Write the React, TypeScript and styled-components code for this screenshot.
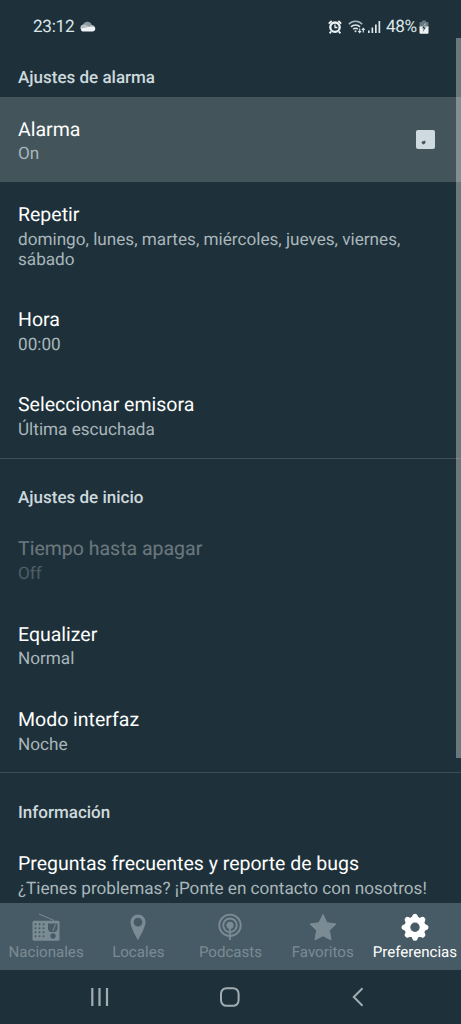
import React from 'react';
import styled, { createGlobalStyle } from 'styled-components';

const Global = createGlobalStyle`
  * { box-sizing: border-box; }
  body { margin: 0; background: #1e313a; font-family: Roboto, sans-serif; text-rendering: geometricPrecision; }
`;

const Screen = styled.div`
  width: 461px;
  height: 1024px;
  display: flex;
  flex-direction: column;
  overflow: hidden;
  background: #1e313a;
`;

const StatusBar = styled.header`
  flex: 0 0 38px;
  display: flex;
  align-items: center;
  justify-content: space-between;
  padding: 16px 32px 0 33px;
  color: #dce5e9;
  font-size: 17.2px;
  line-height: 21px;
`;

const StatusGroup = styled.div`
  display: flex;
  align-items: center;
  svg { display: block; }
`;

const Clock = styled.span`
  width: 47px;
  padding-top: 1px;
  letter-spacing: -0.3px;
`;

const Battery = styled.span`
  width: 33px;
  padding-top: 1px;
  letter-spacing: -0.4px;
`;

const Content = styled.main`
  flex: 1;
  min-height: 0;
  overflow: hidden;
  position: relative;
`;

const ScrollThumb = styled.div`
  position: absolute;
  top: 0;
  right: 0;
  width: 5px;
  height: 720px;
  background: rgba(255, 255, 255, 0.34);
`;

const Heading = styled.h2<{ $divided?: boolean }>`
  height: 58.5px;
  margin: 0;
  padding: ${p => (p.$divided ? 29.5 : 30)}px 18px 0;
  border-top: ${p => (p.$divided ? '1px solid #3c4d55' : 'none')};
  color: #ced9dd;
  font-size: 17px;
  font-weight: 500;
  line-height: 20px;
`;

const Row = styled.div<{ $active?: boolean; $disabled?: boolean }>`
  min-height: 85.35px;
  display: flex;
  align-items: flex-start;
  justify-content: space-between;
  padding: 20px 26.5px 17.5px 18px;
  background: ${p => (p.$active ? '#43545b' : 'transparent')};
  opacity: ${p => (p.$disabled ? 0.34 : 1)};
`;

const Title = styled.div`
  height: 26px;
  color: #fff;
  font-size: 19.5px;
  line-height: 25px;
  white-space: nowrap;
`;

const Summary = styled.div`
  margin-top: 1.8px;
  color: #aab6bb;
  font-size: 17.15px;
  line-height: 20px;
`;

const Checkbox = styled.div`
  width: 19px;
  height: 19px;
  margin-top: 13px;
  border-radius: 2px;
  background: #cfdae0;
  display: flex;
  svg { display: block; }
`;

const Tabs = styled.nav`
  flex: 0 0 67px;
  display: grid;
  grid-template-columns: repeat(5, 1fr);
  background: #475b66;
`;

const Tab = styled.div<{ $active?: boolean }>`
  display: flex;
  flex-direction: column;
  align-items: center;
  padding-top: 10px;
  color: ${p => (p.$active ? '#fff' : '#7b8b93')};
  svg { display: block; }
`;

const TabLabel = styled.span`
  margin-top: 1px;
  font-size: 15.1px;
  line-height: 20px;
  white-space: nowrap;
`;

const SystemNav = styled.footer`
  flex: 0 0 54px;
  display: flex;
  align-items: center;
  justify-content: space-between;
  padding: 0 97px 0 90px;
  svg { display: block; }
`;

const Cloud = () => (
  <svg width="16" height="12" viewBox="0 0 16 12">
    <path d="M3 5a4.600 4.600 0 0 1 8.800-1.500L8 7z" fill="#8e999e" />
    <path d="M.7 8a3.200 3.200 0 0 1 3.300-4.500c2 0 3 1 5 2l2-1.500c3 0 4.500 2 4.300 4z" fill="#b6c0c4" />
    <path d="M3 10.500a2.500 2.500 0 0 1-2-3C4 7 8 5.500 10.500 6c2-.8 4.700-.3 4.700 2 0 1.500-1 2.500-2.700 2.500z" fill="#eef3f5" />
  </svg>
);

const AlarmIcon = () => (
  <svg width="14" height="15" viewBox="0 0 14 15" fill="none" stroke="#edf3f5">
    <path d="M.8 3.600 3.700 1M13.200 3.600 10.300 1M3 11.500l-1.300 1.900M11 11.500l1.300 1.900" strokeWidth="1.900" />
    <circle cx="7" cy="7.200" r="4.700" strokeWidth="2.300" />
    <path d="M7 4.500v3h2.400" strokeWidth="1.300" />
  </svg>
);

const WifiIcon = () => (
  <svg width="18" height="14" viewBox="0 0 18 14" fill="none" stroke="#dce5e9">
    <path d="M.8 4.200a9.200 9.200 0 0 1 13.400 0" strokeWidth="1.500" opacity=".75" />
    <path d="M3 6.900a6.200 6.200 0 0 1 9 0M5.200 9.300a3.200 3.200 0 0 1 4.600 0" strokeWidth="1.600" />
    <circle cx="7.500" cy="11.300" r="1" fill="#dce5e9" stroke="none" />
    <path d="M11.700 8.500v4M10.200 11l1.500 1.700 1.500-1.700M15.300 12.500v-4M13.800 10l1.500-1.700 1.500 1.700" strokeWidth="1.100" />
  </svg>
);

const SignalIcon = () => (
  <svg width="13" height="14" viewBox="0 0 13 14" fill="#dce5e9">
    <rect x="0" y="10.500" width="1.700" height="2.500" />
    <rect x="3.500" y="7.500" width="1.700" height="5.500" />
    <rect x="7" y="4.500" width="1.700" height="8.500" />
    <rect x="10.500" y="1" width="1.700" height="12" />
  </svg>
);

const BatteryIcon = () => (
  <svg width="10" height="15" viewBox="0 0 10 15">
    <path d="M3 .5h4V2h1.500q1 0 1 1v5h-9V3q0-1 1-1H3z" fill="#69777e" />
    <path d="M.5 6.500h9v6.300q0 1-1 1h-7q-1 0-1-1z" fill="#edf3f5" />
    <path d="M6.200 3.500 2.700 8.500h1.800l-1 4L7.300 7.300H5.500z" fill="#1e313a" stroke="#edf3f5" strokeWidth=".5" />
  </svg>
);

const RadioIcon = () => (
  <svg width="28" height="28" viewBox="0 0 28 28">
    <path d="M7 1 22 7.500" stroke="currentColor" strokeWidth="1" />
    <rect x=".5" y="7.800" width="27" height="20" rx="1.500" fill="currentColor" />
    <g fill="#475b66">
      {[11, 15, 19, 23].map(y => [3.5, 7.5, 11.5].map(x => <circle key={`${x}-${y}`} cx={x} cy={y + 0.3} r="1" />))}
      <path d="M16 10.500h9.500v5.500q-1 3-3.500 3h-3q-2.500 0-3-3z" />
      <circle cx="21" cy="23" r="2.700" />
    </g>
    <path d="M23.500 11.500 20.800 18" stroke="currentColor" strokeWidth="1" />
  </svg>
);

const PinIcon = () => (
  <svg width="28" height="28" viewBox="0 0 28 28">
    <path fill="currentColor" fillRule="evenodd" d="M14 1.500a7.600 7.600 0 0 0-7.600 7.600C6.400 14.500 14 27.300 14 27.300s7.600-12.800 7.600-18.200A7.600 7.600 0 0 0 14 1.500m0 3.200a4.400 4.400 0 1 1 0 8.800 4.400 4.400 0 0 1 0-8.800" />
  </svg>
);

const PodcastIcon = () => (
  <svg width="28" height="28" viewBox="0 0 28 28" fill="none" stroke="currentColor" strokeWidth="1.900">
    <circle cx="14" cy="12.300" r="10.700" />
    <circle cx="14" cy="12.300" r="6.800" />
    <circle cx="14" cy="12.300" r="3.600" fill="currentColor" stroke="none" />
    <path d="M14 13v14" />
  </svg>
);

const StarIcon = () => (
  <svg width="28" height="28" viewBox="0 0 28 28" fill="currentColor" stroke="currentColor" strokeWidth="1" strokeLinejoin="round">
    <path d="m14 1.500 4 8.200 9 1.300-6.600 6.300L22 27l-8-4.300L6 27l1.600-9.700L1 11l9-1.300z" />
  </svg>
);

const GearIcon = () => (
  <svg width="28" height="28" viewBox="0 0 28 28" fill="none" stroke="currentColor">
    <circle cx="14" cy="14.300" r="7.600" strokeWidth="5.800" />
    {[0, 45, 90, 135, 180, 225, 270, 315].map(a => (
      <path key={a} transform={`rotate(${a} 14 14.300)`} fill="currentColor" stroke="none" d="M8.500 6Q11.200 4.700 11.600 2.300q.4-1.500 2.400-1.500t2.400 1.500q.4 2.400 3.100 3.700z" />
    ))}
  </svg>
);

const tabs = [
  { label: 'Nacionales', icon: <RadioIcon /> },
  { label: 'Locales', icon: <PinIcon /> },
  { label: 'Podcasts', icon: <PodcastIcon /> },
  { label: 'Favoritos', icon: <StarIcon /> },
  { label: 'Preferencias', icon: <GearIcon />, active: true },
];

type SettingProps = {
  title: string;
  summary: string;
  active?: boolean;
  disabled?: boolean;
  children?: React.ReactNode;
};

const Setting = ({ title, summary, active, disabled, children }: SettingProps) => (
  <Row $active={active} $disabled={disabled}>
    <div>
      <Title>{title}</Title>
      <Summary>{summary}</Summary>
    </div>
    {children}
  </Row>
);

export default function App() {
  return (
    <>
      <Global />
      <Screen>
        <StatusBar>
          <StatusGroup><Clock>23:12</Clock><Cloud /></StatusGroup>
          <StatusGroup>
            <AlarmIcon />
            <svg width="6" height="1" />
            <WifiIcon />
            <svg width="2" height="1" />
            <SignalIcon />
            <svg width="5" height="1" />
            <Battery>48%</Battery>
            <BatteryIcon />
          </StatusGroup>
        </StatusBar>
        <Content>
          <Heading>Ajustes de alarma</Heading>
          <Setting title="Alarma" summary="On" active>
            <Checkbox>
              <svg width="19" height="19" viewBox="0 0 19 19">
                <path d="M5.300 12.500q1.500-2.200 4-1.800.8 3.400-2.200 3.700z" fill="#43545b" />
              </svg>
            </Checkbox>
          </Setting>
          <Setting title="Repetir" summary="domingo, lunes, martes, miércoles, jueves, viernes, sábado" />
          <Setting title="Hora" summary="00:00" />
          <Setting title="Seleccionar emisora" summary="Última escuchada" />
          <Heading $divided>Ajustes de inicio</Heading>
          <Setting title="Tiempo hasta apagar" summary="Off" disabled />
          <Setting title="Equalizer" summary="Normal" />
          <Setting title="Modo interfaz" summary="Noche" />
          <Heading $divided>Información</Heading>
          <Setting title="Preguntas frecuentes y reporte de bugs" summary="¿Tienes problemas? ¡Ponte en contacto con nosotros!" />
          <ScrollThumb />
        </Content>
        <Tabs>
          {tabs.map(t => (
            <Tab key={t.label} $active={t.active}>
              {t.icon}
              <TabLabel>{t.label}</TabLabel>
            </Tab>
          ))}
        </Tabs>
        <SystemNav>
          <svg width="19" height="20" viewBox="0 0 19 20" stroke="#a2adb3" strokeWidth="2.200">
            <path d="M2.300 1v18M9.500 1v18M17 1v18" />
          </svg>
          <svg width="22" height="20" viewBox="0 0 22 20" fill="none" stroke="#a2adb3" strokeWidth="2">
            <rect x="1" y="1.200" width="17.600" height="17.600" rx="5.500" />
          </svg>
          <svg width="12" height="20" viewBox="0 0 12 20" fill="none" stroke="#a2adb3" strokeWidth="2">
            <path d="M10.500 1.300 1.800 10l8.700 8.700" />
          </svg>
        </SystemNav>
      </Screen>
    </>
  );
}
